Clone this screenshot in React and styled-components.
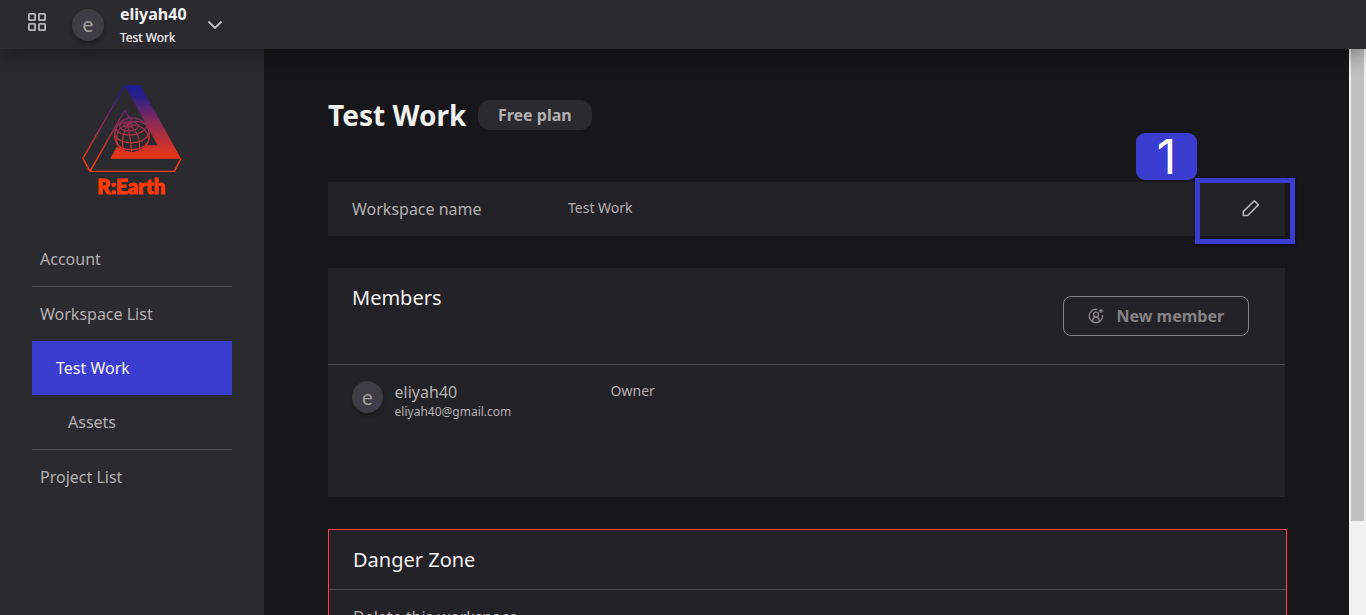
import React from "react";
import styled, { createGlobalStyle } from "styled-components";

const GlobalStyle = createGlobalStyle`
  * { box-sizing: border-box; }
  html, body, #root { height: 100%; }
  body {
    margin: 0;
    overflow: hidden;
    background: #171719;
    color: #b3b1b2;
    font-family: "Noto Sans", "Open Sans", sans-serif;
    font-size: 16px;
  }
`;

const Page = styled.div`
  display: flex;
  flex-direction: column;
  height: 615px;
  width: 1366px;
  overflow: hidden;
`;

const Header = styled.header`
  display: flex;
  flex: none;
  align-items: flex-start;
  height: 49px;
  padding-left: 27px;
  background: #2b2a2f;
  box-shadow: 0 4px 24px rgba(0, 0, 0, 0.45);
  z-index: 2;
`;

const GridIcon = styled.svg`
  margin-top: 12px;
  width: 20px;
  height: 20px;
  flex: none;
`;

const Avatar = styled.div`
  width: ${(p) => p.$width || 32}px;
  height: 32px;
  flex: none;
  border-radius: 50%;
  background: #3f3d45;
  color: #a09e9f;
  font-size: 20px;
  line-height: 33px;
  text-align: center;
  box-shadow: 0 3px 4px rgba(0, 0, 0, 0.3);
`;

const HeaderAvatar = styled(Avatar)`
  margin: 9px 16px 0 25px;
  line-height: 31px;
`;

const UserBlock = styled.div`
  display: flex;
  flex-direction: column;
  color: #f2f1f1;
`;

const UserName = styled.div`
  font-size: 16px;
  font-weight: 700;
  line-height: 22px;
  margin-top: 3px;
`;

const UserTeam = styled.div`
  font-size: 12px;
  line-height: 16px;
  margin-top: 5px;
  -webkit-text-stroke: 0.2px currentColor;
`;

const Chevron = styled.svg`
  width: 16px;
  height: 10px;
  margin: 20px 0 0 20px;
`;

const Body = styled.div`
  display: flex;
  flex: 1;
  min-height: 0;
`;

const Sidebar = styled.aside`
  display: flex;
  flex-direction: column;
  width: 264px;
  flex: none;
  padding: 27px 32px 0;
  background: #2b2a2f;
`;

const Logo = styled.svg`
  width: 120px;
  height: 130px;
  margin: 0 0 26px 40px;
`;

const NavItem = styled.a`
  display: block;
  height: ${(p) => (p.$divided ? 55 : 54)}px;
  padding-left: ${(p) => p.$indent || 8}px;
  line-height: 54px;
  border-bottom: ${(p) => (p.$divided ? "1px solid #4c4b4f" : "none")};
  background: ${(p) => (p.$active ? "#3b3cd0" : "transparent")};
  color: ${(p) => (p.$active ? "#f4f4f8" : "#b3b1b2")};
`;

const Main = styled.main`
  display: flex;
  flex-direction: column;
  flex: 1;
  padding: 46px 64px 0;
  overflow: hidden;
  background: #171719;
`;

const TitleRow = styled.div`
  display: flex;
  align-items: flex-start;
  height: 87px;
  flex: none;
`;

const Title = styled.h1`
  margin: 0;
  color: #f2f1f1;
  font-size: 28px;
  font-weight: 700;
  line-height: 40px;
`;

const Plan = styled.span`
  width: 114px;
  height: 30px;
  margin: 5px 0 0 12px;
  padding-right: 1px;
  border-radius: 12px;
  background: #2b2a2f;
  font-weight: 700;
  line-height: 30px;
  text-align: center;
`;

const Panel = styled.section`
  width: 957px;
  flex: none;
  background: #232226;
`;

const NamePanel = styled(Panel)`
  display: flex;
  position: relative;
  height: 54px;
  margin-bottom: 32px;
  padding: 0 24px;
`;

const FieldLabel = styled.div`
  width: 216px;
  line-height: 54px;
`;

const FieldValue = styled.div`
  flex: 1;
  font-size: 14px;
  line-height: 52px;
`;

const PencilIcon = styled.svg`
  width: 20px;
  height: 20px;
  margin-top: 16px;
`;

const Highlight = styled.div`
  position: absolute;
  top: -4.5px;
  right: -9.5px;
  width: 100px;
  height: 66px;
  border: 5px solid #3b3cd0;
  box-shadow: 0 1px 3px rgba(0, 0, 0, 0.35);
`;

const StepBadge = styled.div`
  position: absolute;
  top: -49px;
  left: 808px;
  width: 61px;
  height: 47px;
  border-radius: 9px;
  background: #3b3cd0;
`;

const StepNumber = styled.div`
  color: #fff;
  font-family: Inter, sans-serif;
  font-size: 48px;
  line-height: 47px;
  text-align: center;
`;

const MembersPanel = styled(Panel)`
  height: 229px;
  margin-bottom: 32px;
`;

const PanelHead = styled.div`
  display: flex;
  justify-content: space-between;
  height: 97px;
  padding: 0 36px 0 24px;
  border-bottom: 1px solid #4c4b4f;
`;

const PanelTitle = styled.h2`
  margin: 0;
  color: #f2f1f1;
  font-size: 20px;
  font-weight: 400;
  line-height: 60px;
`;

const MemberButton = styled.button`
  display: flex;
  align-items: center;
  gap: 12.5px;
  width: 186px;
  height: 40px;
  margin-top: 28px;
  padding: 0 0 0 24px;
  border: 1px solid #858385;
  border-radius: 8px;
  background: transparent;
  color: #858385;
  font: 700 16px "Noto Sans", sans-serif;
`;

const MemberRow = styled.div`
  display: flex;
  padding: 16px 24px;
`;

const MemberInfo = styled.div`
  width: 216px;
  margin-left: 11.6px;
`;

const MemberName = styled.div`
  line-height: 22px;
`;

const MemberMail = styled.div`
  font-size: 12px;
  line-height: 18px;
`;

const Role = styled.div`
  font-size: 14px;
  line-height: 19px;
`;

const DangerPanel = styled(Panel)`
  width: 959px;
  height: 180px;
  border: 1px solid #ff3c53;
`;

const DangerHead = styled.div`
  height: 60px;
  padding-left: 24px;
  border-bottom: 1px solid #4c4b4f;
`;

const DangerText = styled.div`
  padding: 16px 24px;
  line-height: 22px;
`;

const ScrollTrack = styled.div`
  width: 17px;
  flex: none;
  padding: 0 2px;
  background: #f1f1f1;
`;

const ScrollThumb = styled.div`
  height: 472px;
  background: #c1c1c1;
`;

function RearthLogo() {
  return (
    <Logo viewBox="0 0 360 390" fill="none">
      <defs>
        <linearGradient id="fade" gradientUnits="userSpaceOnUse" x1="0" y1="28" x2="0" y2="288">
          <stop offset="0" stopColor="#1d1c97" />
          <stop offset="0.13" stopColor="#292087" />
          <stop offset="0.42" stopColor="#8a2b58" />
          <stop offset="0.75" stopColor="#d83424" />
          <stop offset="0.92" stopColor="#fb3a08" />
        </linearGradient>
      </defs>
      <path
        fill="url(#fade)"
        d="M158 28H205L327 248H115L134 212L150 219L172 230L208 224L224 208H257Z"
      />
      <g stroke="url(#fade)">
        <path
          strokeWidth="4.2"
          strokeLinejoin="round"
          d="M158 29L33 247L54 286H307L327 248M54 286L158 103L174 128"
        />
        <circle cx="180" cy="178" r="52" fill="#2b2a2f" strokeWidth="4" />
        <g strokeWidth="3.6">
          <ellipse cx="168" cy="147" rx="13" ry="6" />
          <ellipse cx="171" cy="151" rx="28" ry="14" />
          <path d="M132 158C142 184 205 185 224 152M128 177C146 209 211 208 231 175M136 204C155 229 210 226 228 198" />
          <path d="M168 147C140 151 127 176 137 205M168 147C151 169 147 203 157 224M168 147C172 173 179 207 178 229M168 147C193 157 207 190 202 224M168 147C207 143 230 164 230 193M168 147C181 134 199 132 216 143M168 147C161 137 147 136 139 146M168 147L181 126" />
        </g>
      </g>
      <text
        x="76"
        y="355"
        fill="#ff3a06"
        stroke="#ff3a06"
        strokeWidth="3"
        fontFamily="Lato, sans-serif"
        fontWeight="900"
        fontSize="61"
        textLength="204"
        lengthAdjust="spacingAndGlyphs"
      >
        R:Earth
      </text>
    </Logo>
  );
}

export default function App() {
  return (
    <>
      <GlobalStyle />
      <Page>
        <Header>
          <GridIcon viewBox="0 0 20 20" fill="none" stroke="#b9b7b8" strokeWidth="1.8">
            <rect x="1.9" y="1.9" width="6.2" height="6.2" rx="0.7" />
            <rect x="11.9" y="1.9" width="6.2" height="6.2" rx="0.7" />
            <rect x="1.9" y="11.9" width="6.2" height="6.2" rx="0.7" />
            <rect x="11.9" y="11.9" width="6.2" height="6.2" rx="0.7" />
          </GridIcon>
          <HeaderAvatar>e</HeaderAvatar>
          <UserBlock>
            <UserName>eliyah40</UserName>
            <UserTeam>Test Work</UserTeam>
          </UserBlock>
          <Chevron viewBox="0 0 16 10" fill="none" stroke="#c2c0c1" strokeWidth="1.8" strokeLinecap="round" strokeLinejoin="round">
            <path d="M2 2L8 8L14 2" />
          </Chevron>
        </Header>
        <Body>
          <Sidebar>
            <RearthLogo />
            <NavItem $divided>Account</NavItem>
            <NavItem>Workspace List</NavItem>
            <NavItem $active $indent={24}>Test Work</NavItem>
            <NavItem $divided $indent={36}>Assets</NavItem>
            <NavItem>Project List</NavItem>
          </Sidebar>
          <Main>
            <TitleRow>
              <Title>Test Work</Title>
              <Plan>Free plan</Plan>
            </TitleRow>
            <NamePanel>
              <FieldLabel>Workspace name</FieldLabel>
              <FieldValue>Test Work</FieldValue>
              <PencilIcon viewBox="0 0 20 20" fill="none" stroke="#b9b7b8" strokeWidth="1.5" strokeLinejoin="round">
                <path d="M13.3 2.8L17.4 6.9L6.8 17.5H2.3V13.6Z" />
              </PencilIcon>
              <Highlight />
              <StepBadge>
                <StepNumber>1</StepNumber>
              </StepBadge>
            </NamePanel>
            <MembersPanel>
              <PanelHead>
                <PanelTitle>Members</PanelTitle>
                <MemberButton>
                  <svg width="16" height="16" viewBox="0 0 16 16" fill="none" stroke="#858385" strokeWidth="1.4">
                    <path d="M9.4 1.5A6.7 6.7 0 1 0 14.5 7" />
                    <circle cx="8" cy="6.6" r="2.5" />
                    <path d="M4.9 13.2V12C4.9 10.2 6 9.2 8 9.2S11.1 10.2 11.1 12V13.2" />
                    <path d="M13 0.7V5.1M10.8 2.9H15.2" />
                  </svg>
                  New member
                </MemberButton>
              </PanelHead>
              <MemberRow>
                <Avatar $width={31}>e</Avatar>
                <MemberInfo>
                  <MemberName>eliyah40</MemberName>
                  <MemberMail>eliyah40@gmail.com</MemberMail>
                </MemberInfo>
                <Role>Owner</Role>
              </MemberRow>
            </MembersPanel>
            <DangerPanel>
              <DangerHead>
                <PanelTitle>Danger Zone</PanelTitle>
              </DangerHead>
              <DangerText>Delete this workspace</DangerText>
            </DangerPanel>
          </Main>
          <ScrollTrack>
            <ScrollThumb />
          </ScrollTrack>
        </Body>
      </Page>
    </>
  );
}
